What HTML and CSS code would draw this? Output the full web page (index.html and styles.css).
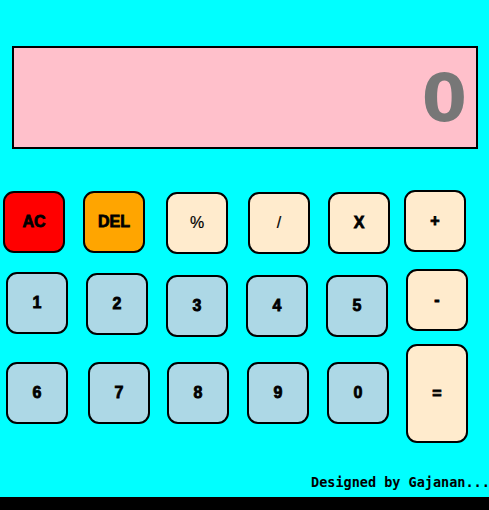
FILE: index.html
```html
<!DOCTYPE html>
<html>
<head>
<meta charset="utf-8">
<title>Calculator</title>
<link rel="stylesheet" href="styles.css">
</head>
<body>
<div class="page">
  <div class="display"><span class="value">0</span></div>
  <div class="keys">
    <div class="row row1">
      <button class="key ac">AC</button>
      <button class="key del">DEL</button>
      <button class="key op thin">%</button>
      <button class="key op thin">/</button>
      <button class="key op">X</button>
      <button class="key op">+</button>
    </div>
    <div class="row row2">
      <button class="key num">1</button>
      <button class="key num">2</button>
      <button class="key num">3</button>
      <button class="key num">4</button>
      <button class="key num">5</button>
      <button class="key op">-</button>
    </div>
    <div class="row row3">
      <button class="key num">6</button>
      <button class="key num">7</button>
      <button class="key num">8</button>
      <button class="key num">9</button>
      <button class="key num">0</button>
      <button class="key op eq">=</button>
    </div>
  </div>
  <div class="credit">Designed by Gajanan...</div>
  <div class="bar"></div>
</div>
</body>
</html>
```
FILE: styles.css
```css
html, body {
  margin: 0;
  padding: 0;
  background: #00ffff;
  overflow: hidden;
}
.page {
  width: 489px;
  height: 510px;
  display: flex;
  flex-direction: column;
  overflow: hidden;
}
.display {
  margin: 46px 11px 0 12px;
  height: 103px;
  box-sizing: border-box;
  border: 2px solid #000;
  background: #ffc0cb;
  display: flex;
  align-items: center;
  justify-content: flex-end;
  padding: 1px 9px 0 0;
}
.value {
  font-family: "DejaVu Sans", sans-serif;
  font-weight: bold;
  font-size: 65px;
  line-height: 1;
  color: #777777;
}
.keys {
  margin-top: 41px;
  display: flex;
  flex-direction: column;
}
.row {
  display: flex;
  align-items: flex-start;
}
.row1 { height: 79px; }
.row2 { height: 75px; }
.row3 { height: 99px; }
.key {
  width: 62px;
  height: 62px;
  box-sizing: border-box;
  border: 2px solid #000;
  border-radius: 11px;
  padding: 0;
  margin: 0;
  font-family: "Liberation Sans", Arial, sans-serif;
  font-weight: bold;
  font-size: 16px;
  color: #000;
  -webkit-text-stroke: 0.8px #000;
  display: flex;
  align-items: center;
  justify-content: center;
  flex: none;
}
.ac { background: #ff0000; }
.del { background: #ffa500; }
.op { background: #ffebcd; }
.num { background: #add8e6; }
.thin { -webkit-text-stroke: 0.2px #000; font-weight: normal; }
.eq { height: 99px; }

.row1 .key:nth-child(1) { margin: 1px 0 0 3px; }
.row1 .key:nth-child(2) { margin: 1px 0 0 18px; }
.row1 .key:nth-child(3) { margin: 2px 0 0 21px; }
.row1 .key:nth-child(4) { margin: 2px 0 0 20px; }
.row1 .key:nth-child(5) { margin: 2px 0 0 18px; }
.row1 .key:nth-child(6) { margin: 0 0 0 14px; }

.row2 .key:nth-child(1) { margin: 3px 0 0 6px; }
.row2 .key:nth-child(2) { margin: 4px 0 0 18px; }
.row2 .key:nth-child(3) { margin: 6px 0 0 18px; }
.row2 .key:nth-child(4) { margin: 6px 0 0 18px; }
.row2 .key:nth-child(5) { margin: 6px 0 0 18px; }
.row2 .key:nth-child(6) { margin: 0 0 0 18px; }

.row3 .key:nth-child(1) { margin: 18px 0 0 6px; }
.row3 .key:nth-child(2) { margin: 18px 0 0 20px; }
.row3 .key:nth-child(3) { margin: 18px 0 0 17px; }
.row3 .key:nth-child(4) { margin: 18px 0 0 18px; }
.row3 .key:nth-child(5) { margin: 18px 0 0 18px; }
.row3 .key:nth-child(6) { margin: 0 0 0 17px; }

.credit {
  margin: 31px 0 0 311px;
  white-space: nowrap;
  font-family: "DejaVu Sans Mono", monospace;
  font-weight: bold;
  font-size: 13.5px;
  line-height: 16px;
  color: #000;
}
.bar {
  margin-top: 7px;
  height: 13px;
  background: #000;
  flex: none;
}
```
